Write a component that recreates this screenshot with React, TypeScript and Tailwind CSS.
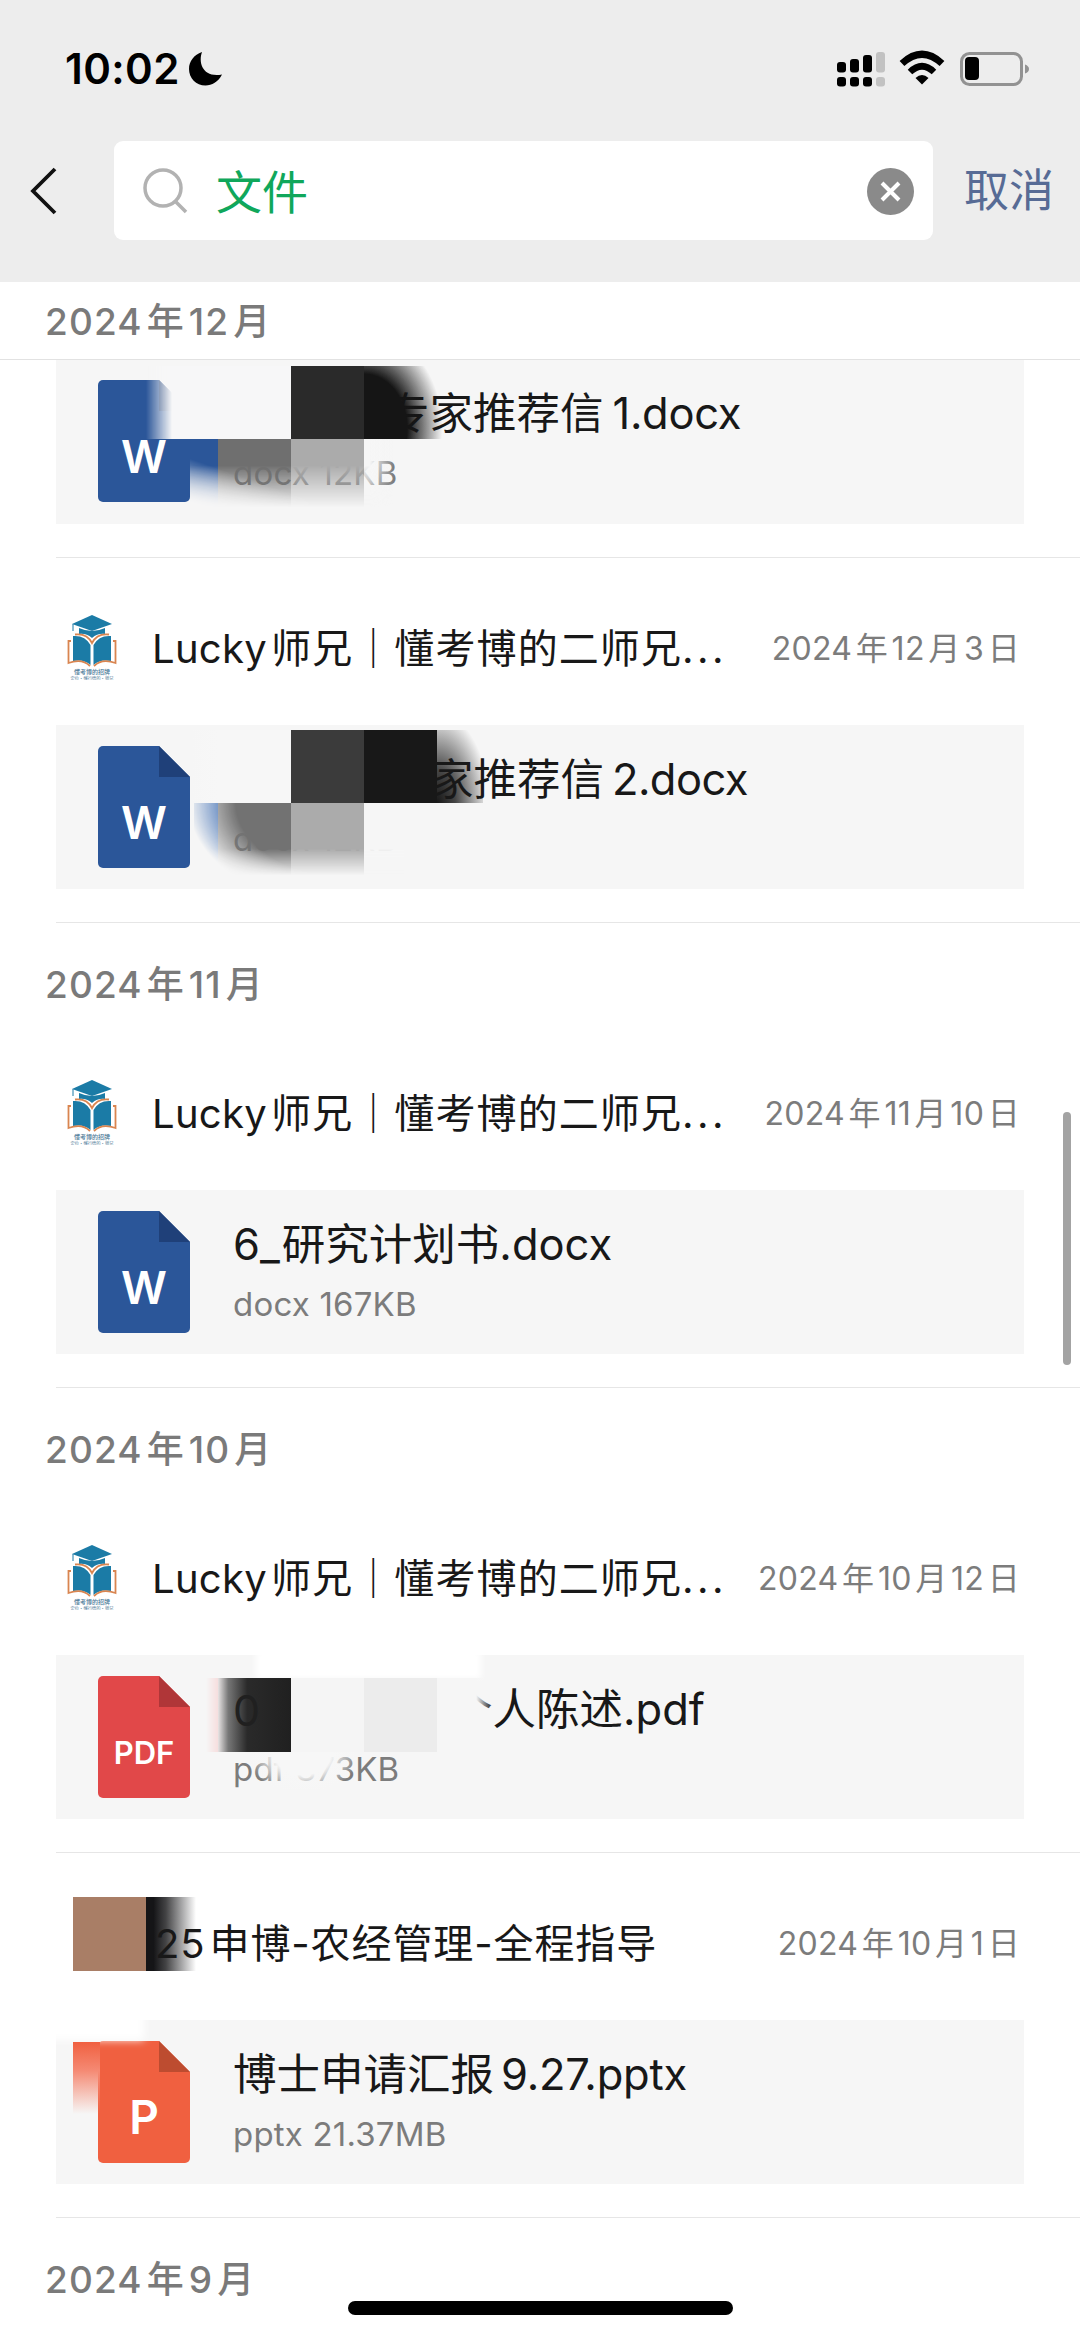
import React from 'react';

type FileKind = 'docx' | 'pdf' | 'pptx';

interface FileRecord {
  id: number;
  sender?: React.ReactNode;
  date?: string;
  kind: FileKind;
  title: React.ReactNode;
  meta: React.ReactNode;
  smudge?: React.ReactNode;
  senderSmudge?: React.ReactNode;
}

interface MonthGroup {
  month: string;
  records: FileRecord[];
}

const FILE_STYLE: Record<FileKind, { label: string; fill: string; fold: string; size: number; baseline: number }> = {
  docx: { label: 'W', fill: '#2b5699', fold: '#1f4079', size: 45, baseline: 93 },
  pdf: { label: 'PDF', fill: '#e14849', fold: '#b03638', size: 31, baseline: 88 },
  pptx: { label: 'P', fill: '#f06040', fold: '#bd4c30', size: 46, baseline: 93 },
};

const FileIcon: React.FC<{ kind: FileKind }> = ({ kind }) => {
  const s = FILE_STYLE[kind];
  return (
    <svg width="92" height="122" viewBox="0 0 92 122" className="shrink-0">
      <path d="M5 0H61L92 31V117a5 5 0 0 1-5 5H5a5 5 0 0 1-5-5V5a5 5 0 0 1 5-5z" fill={s.fill} />
      <path d="M61 0L92 31H61z" fill={s.fold} />
      <text x="46" y={s.baseline} textAnchor="middle" fontSize={s.size} fontWeight="600" fontFamily="Inter" fill="#fff">
        {s.label}
      </text>
    </svg>
  );
};

const SchoolLogo = () => (
  <svg width="52" height="66" viewBox="0 0 52 66">
    <path d="M26 1L46 10L26 17L6 10z" fill="#1b7ba6" />
    <path d="M13 14Q26 20 39 14V20Q32 19 26 24Q20 19 13 20z" fill="#1b7ba6" />
    <path d="M7 10V17" stroke="#1b7ba6" strokeWidth="1" />
    <path d="M7 22Q19 21 24.500 31V51Q18 45 7 47z" fill="#1b7ba6" />
    <path d="M45 22Q33 21 27.500 31V51Q34 45 45 47z" fill="#1b7ba6" />
    <path d="M9 20.500Q21 19 26 29Q31 19 43 20.500" fill="none" stroke="#d98550" strokeWidth="1.800" />
    <path d="M5 27H2.500V49Q16 44 24 52M47 27H49.500V49Q36 44 28 52" fill="none" stroke="#d98550" strokeWidth="1.800" />
    <text x="26" y="60" textAnchor="middle" fontSize="6" fontWeight="500" fontFamily="Noto Sans CJK SC" fill="#4a7896">懂考博的招牌</text>
    <text x="26" y="65.500" textAnchor="middle" fontSize="4.300" fontFamily="Noto Sans CJK SC" fill="#4a7896">定位·懂行情的·师兄</text>
  </svg>
);

const SenderName = () => (
  <span className="tracking-[0.3px]">
    Lucky<span className="ml-[4px] tracking-[1.1px]">师兄｜懂考博的二师兄</span>
    <span className="tracking-[3.4px]">...</span>
  </span>
);

const groups: MonthGroup[] = [
  {
    month: '2024年12月',
    records: [
      {
        id: 1,
        kind: 'docx',
        title: <span className="ml-[153px]">专家推荐信<span className="ml-[9px] tracking-[-0.3px]">1.docx</span></span>,
        meta: 'docx 12KB',
        smudge: (
          <>
            <div className="absolute left-[90px] top-[6px] flex h-[73px] w-[310px] [mask-image:linear-gradient(to_right,transparent,black_26px)]">
              <div className="w-[145px] bg-[#f7f7f8]" />
              <div className="w-[73px] bg-[#2a2a2a]" />
              <div className="w-[78px] bg-[radial-gradient(ellipse_80px_100px_at_0%_85%,#151515_0%,#151515_54%,transparent_98%)]" />
            </div>
            <div className="absolute left-[134px] top-[79px] flex h-[70px] w-[204px] [mask-composite:intersect] [mask-image:linear-gradient(to_bottom,black_38%,transparent_98%),linear-gradient(to_top_right,transparent_5%,black_36%)]">
              <div className="w-[28px] bg-[#2b5699]" />
              <div className="w-[73px] bg-[#6f6f6f]" />
              <div className="w-[73px] bg-[#ababab]" />
              <div className="w-[30px] bg-[linear-gradient(to_right,#f6f6f6_20%,transparent)]" />
            </div>
          </>
        ),
      },
      {
        id: 2,
        sender: <SenderName />,
        date: '2024年12月3日',
        kind: 'docx',
        title: <span className="ml-[197px]">家推荐信<span className="ml-[8px] tracking-[-0.6px]">2.docx</span></span>,
        meta: 'docx 12KB',
        smudge: (
          <>
            <div className="absolute left-[134px] top-[5px] flex h-[73px] w-[300px]">
              <div className="w-[101px] bg-[linear-gradient(to_right,transparent,#f7f7f7_30%)]" />
              <div className="w-[73px] bg-[#3b3b3b]" />
              <div className="w-[73px] bg-[#181818]" />
              <div className="w-[46px] bg-[radial-gradient(ellipse_52px_90px_at_0%_100%,#181818_0%,#181818cc_35%,transparent_100%)]" />
            </div>
            <div className="absolute left-[138px] top-[78px] flex h-[74px] w-[210px] [mask-composite:intersect] [mask-image:linear-gradient(to_bottom,black_62%,transparent_98%),radial-gradient(ellipse_170px_110px_at_75%_0%,black_68%,transparent_96%)]">
              <div className="w-[24px] bg-[#2f62ad]" />
              <div className="w-[73px] bg-[#727272]" />
              <div className="w-[73px] bg-[#ababab]" />
              <div className="w-[40px] bg-[#f6f6f6]" />
            </div>
          </>
        ),
      },
    ],
  },
  {
    month: '2024年11月',
    records: [
      {
        id: 3,
        sender: <SenderName />,
        date: '2024年11月10日',
        kind: 'docx',
        title: <span><span className="tracking-[2px]">6_</span>研究计划书.docx</span>,
        meta: 'docx 167KB',
      },
    ],
  },
  {
    month: '2024年10月',
    records: [
      {
        id: 4,
        sender: <SenderName />,
        date: '2024年10月12日',
        kind: 'pdf',
        title: <span className="ml-[216px]">个人陈述.pdf</span>,
        meta: 'pdf 873KB',
        smudge: (
          <>
            <div className="absolute left-[200px] top-[-4px] h-[28px] w-[225px] bg-white blur-[3px]" />
            <div className="absolute left-[150px] top-[23px] flex h-[74px]">
              <div className="w-[12px] bg-[linear-gradient(to_right,transparent,#f6dede)]" />
              <div className="w-[73px] bg-[linear-gradient(to_right,#e8e4e4,#777_14%,#2a2a2a_40%,#202020)]" />
              <div className="w-[73px] bg-[#f5f5f5]" />
              <div className="w-[73px] bg-[#ececec]" />
              <div className="w-[56px] bg-[linear-gradient(to_right,#f6f6f6_70%,transparent)]" />
            </div>
            <div className="absolute left-[192px] top-[97px] h-[38px] w-[110px] bg-[radial-gradient(ellipse_55px_38px_at_50%_10%,#f7f7f7_50%,transparent_100%)]" />
            <span className="absolute left-[177px] top-[30px] text-[43px] leading-[50px] text-[#202020]">0</span>
          </>
        ),
      },
      {
        id: 5,
        sender: <span className="tracking-[0.9px]">25<span className="ml-[4px]">申博-农经管理-全程指导</span></span>,
        date: '2024年10月1日',
        kind: 'pptx',
        title: <span>博士申请汇报<span className="ml-[7px] tracking-[-0.2px]">9.27.pptx</span></span>,
        meta: 'pptx 21.37MB',
        senderSmudge: (
          <div className="absolute left-[17px] top-[44px] flex h-[74px]">
            <div className="w-[73px] bg-[#a97e66]" />
            <div className="w-[50px] bg-[linear-gradient(to_right,#151517_15%,#151517cc_40%,transparent)]" />
          </div>
        ),
        smudge: (
          <>
            <div className="absolute -left-2 -top-2 h-[28px] w-[96px] bg-white blur-[4px]" />
            <div className="absolute left-[17px] top-[22px] h-[72px] w-[27px] bg-[linear-gradient(to_bottom,#f06040,#f58a74_40%,transparent)]" />
          </>
        ),
      },
    ],
  },
  { month: '2024年9月', records: [] },
];

const splitDate = (value: string) =>
  value.split(/(年|月|日)/).filter(Boolean).map((part, i) => (
    <span key={i} className={i > 0 ? 'ml-[0.11em]' : ''}>
      {part}
    </span>
  ));

const StatusBar = () => (
  <div className="flex h-[141px] items-start justify-between pl-[65px] pr-[50px] pt-[49px]">
    <div className="flex items-center gap-[9px]">
      <span className="text-[42px] leading-[40px] font-semibold tracking-[0.4px] text-black">10:02</span>
      <svg width="34" height="34" viewBox="0 0 34 34">
        <path d="M13 0C9 11 14 26 33 22.500C29 30 23 33.500 16.500 33.500C7 33.500 0 26 0 17C0 9 5 3 13 0z" fill="#000" />
      </svg>
    </div>
    <svg width="193" height="40" viewBox="0 0 193 40">
      <g fill="#000">
        <rect x="0" y="13" width="9" height="10.500" rx="3" />
        <rect x="13" y="10" width="9" height="13.500" rx="3" />
        <rect x="26" y="6" width="9" height="17.500" rx="3" />
        <rect x="0" y="28" width="9" height="9.500" rx="3" />
        <rect x="13" y="28" width="9" height="9.500" rx="3" />
        <rect x="26" y="28" width="9" height="9.500" rx="3" />
      </g>
      <g fill="#c2c2c2">
        <rect x="39" y="3" width="9" height="20.500" rx="3" />
        <rect x="39" y="28" width="9" height="9.500" rx="3" />
      </g>
      <path d="M65 14.500Q85 -4 105 14.500" fill="none" stroke="#000" strokeWidth="7" />
      <path d="M73 23Q85 11.500 97 23" fill="none" stroke="#000" strokeWidth="6.500" />
      <path d="M78.500 29Q85 23 91.500 29L85 35.500z" fill="#000" />
      <rect x="124.500" y="4.500" width="60" height="31" rx="8" fill="none" stroke="#929292" strokeWidth="3" />
      <rect x="128" y="8" width="14" height="23" rx="4" fill="#000" />
      <path d="M188 15.500Q192 17 192 20Q192 23 188 24.500z" fill="#929292" />
    </svg>
  </div>
);

const SearchBar = () => (
  <div className="flex h-[99px] items-center">
    <svg width="30" height="50" viewBox="0 0 30 50" className="ml-[29px]">
      <path d="M26 3L4 25L26 47" fill="none" stroke="#111" strokeWidth="3.800" />
    </svg>
    <div className="ml-[55px] flex h-[99px] w-[819px] items-center rounded-[9px] bg-white pl-[29px] pr-[19px]">
      <svg width="46" height="46" viewBox="0 0 46 46">
        <circle cx="20" cy="20" r="18" fill="none" stroke="#b2b2b2" strokeWidth="3.500" />
        <path d="M32 33L43 44" stroke="#b2b2b2" strokeWidth="3.500" />
      </svg>
      <span className="ml-[27px] flex-1 pt-[2px] text-[46px] leading-[50px] text-[#10a75b]">文件</span>
      <svg width="47" height="47" viewBox="0 0 47 47" className="mt-px">
        <circle cx="23.500" cy="23.500" r="23.500" fill="#8a8a8a" />
        <path d="M15 15L32 32M32 15L15 32" stroke="#fff" strokeWidth="4" />
      </svg>
    </div>
    <span className="ml-[31px] whitespace-nowrap text-[45px] leading-[50px] text-[#576b95]">取消</span>
  </div>
);

const RecordItem: React.FC<{ record: FileRecord }> = ({ record }) => (
  <div className="ml-14 border-b border-[#e6e6e6] pb-[33px]">
    {record.sender && (
      <div className="relative flex h-[167px] items-center pt-[14px] pr-[60px]">
        {record.senderSmudge ?? (
          <div className="ml-[10px] w-[52px] pb-1">
            <SchoolLogo />
          </div>
        )}
        <div className={`relative flex-1 whitespace-nowrap text-[40px] leading-[50px] text-[#181818] ${record.senderSmudge ? 'ml-[99px]' : 'ml-[34px]'}`}>
          {record.sender}
        </div>
        <span className="whitespace-nowrap text-[32px] leading-[40px] tracking-[0.3px] text-[#7c7c7c]">{splitDate(record.date ?? '')}</span>
      </div>
    )}
    <div className={`relative flex h-[164px] w-[968px] bg-[#f6f6f6] pl-[42px] ${record.sender ? 'pt-[21px]' : 'pt-[20px]'}`}>
      <FileIcon kind={record.kind} />
      <div className="ml-[43px] flex flex-col whitespace-nowrap">
        <div className="mt-[7px] text-[43.5px] leading-[52px] text-[#181818]">{record.title}</div>
        <div className="mt-[14px] text-[33px] leading-[40px] tracking-[0.2px] text-[#7c7c7c]">{record.meta}</div>
      </div>
      {record.smudge}
    </div>
  </div>
);

export default function App() {
  return (
    <div className="relative h-[2337px] w-[1080px] overflow-hidden bg-white font-['Inter','Noto_Sans_CJK_SC',sans-serif]">
      <div className="h-[282px] bg-[#ededed]">
        <StatusBar />
        <SearchBar />
      </div>
      {groups.map((group, index) => (
        <section key={group.month}>
          <h2
            className={`flex pl-[45px] text-[37px] leading-[44px] font-medium tracking-[1.1px] text-[#7a7a7a] ${
              index === 0 ? 'h-[78px] border-b border-[#e2e2e2] pt-[18px]' : 'h-[100px] pt-[40px]'
            }`}
          >
            {splitDate(group.month)}
          </h2>
          {group.records.map((record) => (
            <RecordItem key={record.id} record={record} />
          ))}
        </section>
      ))}
      {/* scroll thumb and home indicator */}
      <div className="absolute left-[1063px] top-[1112px] h-[253px] w-[8px] rounded-full bg-[#a3a3a3]" />
      <div className="absolute left-[348px] top-[2301px] h-[14px] w-[385px] rounded-full bg-black" />
    </div>
  );
}
